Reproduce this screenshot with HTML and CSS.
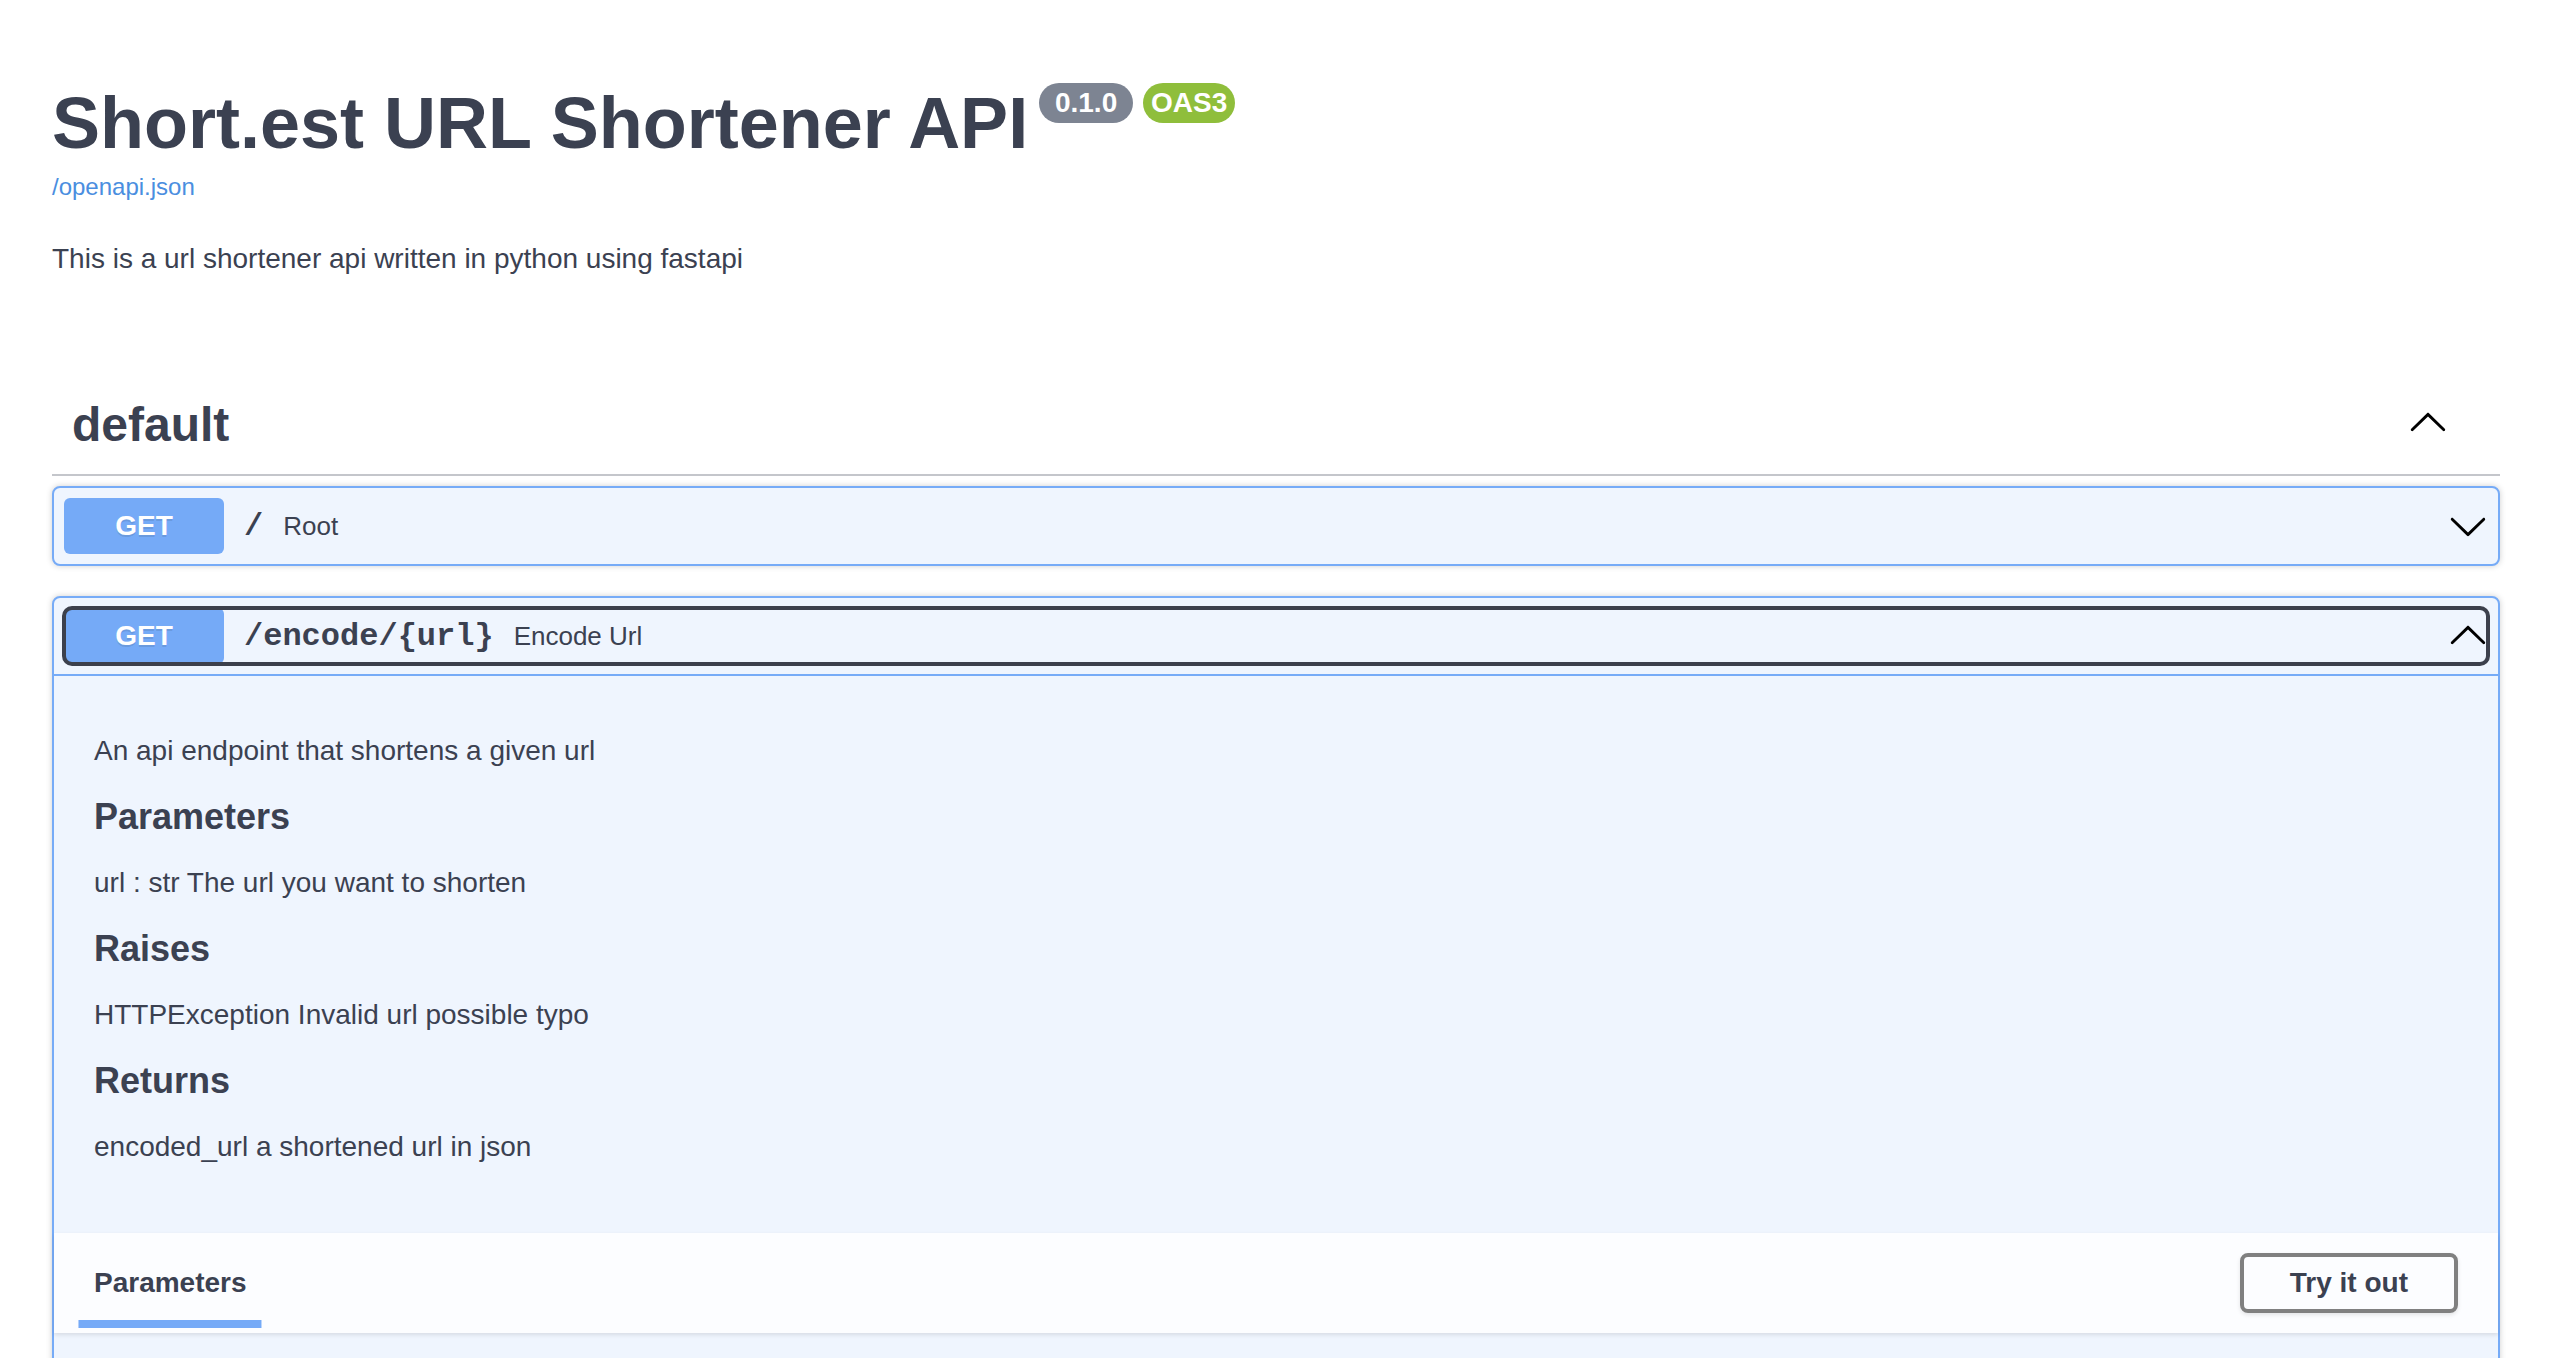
FILE: index.html
```html
<!DOCTYPE html>
<html lang="en">
<head>
<meta charset="utf-8">
<title>Short.est URL Shortener API - Swagger UI</title>
<link rel="stylesheet" href="styles.css">
</head>
<body>
<div class="wrapper">
  <section class="info">
    <div class="main">
      <h2 class="title">
        <span class="title-text">Short.est URL Shortener API</span>
        <span class="badges">
          <span class="badge badge-version"> 0.1.0 </span>
          <span class="badge badge-oas">OAS3</span>
        </span>
      </h2>
      <a class="link" href="#">/openapi.json</a>
    </div>
    <div class="info-desc">
      <p>This is a url shortener api written in python using fastapi</p>
    </div>
  </section>

  <section class="tag-section">
    <h3 class="opblock-tag">
      <span class="tag-name">default</span>
      <svg class="tag-arrow" viewBox="0 0 20 20" aria-hidden="true"><path transform="rotate(180 10 10)" d="M17.418 6.109c.272-.268.709-.268.979 0s.271.701 0 .969l-7.908 7.83c-.27.268-.707.268-.979 0l-7.908-7.830c-.27-.268-.27-.701 0-.969.271-.268.709-.268.979 0L10 13.25l7.418-7.141z"/></svg>
    </h3>

    <div class="opblock">
      <div class="opblock-summary">
        <div class="summary-control">
          <span class="method">GET</span>
          <span class="path">/</span>
          <span class="summary-desc">Root</span>
          <svg class="op-arrow" viewBox="0 0 20 20" aria-hidden="true"><path d="M17.418 6.109c.272-.268.709-.268.979 0s.271.701 0 .969l-7.908 7.83c-.27.268-.707.268-.979 0l-7.908-7.83c-.27-.268-.27-.701 0-.969.271-.268.709-.268.979 0L10 13.25l7.418-7.141z"/></svg>
        </div>
      </div>
    </div>

    <div class="opblock is-open">
      <div class="opblock-summary">
        <div class="summary-control focused">
          <span class="method">GET</span>
          <span class="path">/encode/{url}</span>
          <span class="summary-desc">Encode Url</span>
          <svg class="op-arrow" viewBox="0 0 20 20" aria-hidden="true"><path transform="rotate(180 10 10)" d="M17.418 6.109c.272-.268.709-.268.979 0s.271.701 0 .969l-7.908 7.83c-.27.268-.707.268-.979 0l-7.908-7.83c-.27-.268-.27-.701 0-.969.271-.268.709-.268.979 0L10 13.25l7.418-7.141z"/></svg>
        </div>
      </div>
      <div class="opblock-body">
        <div class="description-wrapper">
          <div class="markdown">
            <p>An api endpoint that shortens a given url</p>
            <h2>Parameters</h2>
            <p>url : str The url you want to shorten</p>
            <h2>Raises</h2>
            <p>HTTPException Invalid url possible typo</p>
            <h2>Returns</h2>
            <p>encoded_url a shortened url in json</p>
          </div>
        </div>
        <div class="section-header">
          <div class="tab"><h4><span class="tab-label">Parameters</span></h4></div>
          <button class="btn-try" type="button">Try it out</button>
        </div>
        <div class="table-container"></div>
      </div>
    </div>
  </section>
</div>
</body>
</html>
```
FILE: styles.css
```css
html, body {
  margin: 0;
  background: #ffffff;
}

body {
  font-family: "Liberation Sans", Arial, Helvetica, sans-serif;
  color: #3b4151;
}

.wrapper {
  padding: 0 56px 0 52px;
}

/* ---------- info ---------- */
.info {
  padding-top: 82px;
}

.title {
  display: flex;
  align-items: flex-start;
  margin: 0;
  font-size: 72px;
  line-height: 82px;
  font-weight: 700;
  color: #3b4151;
}

.badges {
  display: flex;
  gap: 10px;
  margin-left: 11px;
  margin-top: 1px;
}

.badge {
  font-family: "Liberation Sans", Arial, sans-serif;
  font-size: 28px;
  line-height: 32px;
  font-weight: 700;
  color: #ffffff;
  padding: 4px 8px;
  border-radius: 114px;
  white-space: pre;
}

.badge-version {
  background: #7d8492;
}

.badge-oas {
  background: #8fbe3b;
}

.link {
  display: block;
  margin-top: 9px;
  font-size: 24px;
  line-height: 28px;
  color: #4a8ee0;
  text-decoration: none;
}

.info-desc p {
  margin: 42px 0 0;
  font-size: 28px;
  line-height: 32px;
  color: #3b4151;
}

/* ---------- tag ---------- */
.tag-section {
  margin-top: 104px;
}

.opblock-tag {
  display: flex;
  align-items: center;
  margin: 0 0 10px;
  padding: 18px 52px 22px 20px;
  border-bottom: 2px solid #c4c6cb;
  font-size: 48px;
  line-height: 55px;
  font-weight: 700;
  color: #3b4151;
}

.tag-name {
  flex: 1;
}

.tag-arrow {
  display: block;
  width: 40px;
  height: 40px;
  margin-bottom: 3px;
  fill: #000000;
}

/* ---------- operation blocks ---------- */
.opblock {
  margin-bottom: 30px;
  border: 2px solid #76abf7;
  border-radius: 8px;
  background: #eff5fe;
  box-shadow: 0 0 6px rgba(0, 0, 0, 0.19);
}

.opblock-summary {
  display: flex;
  padding: 10px;
}

.opblock.is-open .opblock-summary {
  border-bottom: 2px solid #76abf7;
}

.summary-control {
  flex: 1;
  display: flex;
  align-items: center;
  border-radius: 8px;
}

.summary-control.focused {
  outline: 4px solid #3c404c;
  outline-offset: -2px;
}

.method {
  min-width: 160px;
  padding: 12px 0;
  font-size: 28px;
  line-height: 32px;
  font-weight: 700;
  color: #ffffff;
  text-align: center;
  background: #75aaf7;
  border-radius: 6px;
  text-shadow: 0 2px 0 rgba(0, 0, 0, 0.1);
}

.path {
  padding: 0 20px;
  font-family: "Liberation Mono", "Courier New", monospace;
  font-size: 32px;
  font-weight: 700;
  color: #3b4151;
}

.summary-desc {
  flex: 1;
  font-size: 26px;
  color: #3b4151;
}

.op-arrow {
  flex: none;
  display: block;
  width: 40px;
  height: 40px;
  fill: #000000;
}

/* ---------- body ---------- */
.description-wrapper {
  padding: 31px 40px 42px;
}

.markdown > * {
  margin: 24px 0;
  color: #3b4151;
}

.markdown p {
  font-size: 28px;
  line-height: 40px;
}

.markdown h2 {
  font-size: 36px;
  line-height: 44px;
  font-weight: 700;
}

.section-header {
  display: flex;
  align-items: center;
  justify-content: space-between;
  box-sizing: border-box;
  min-height: 100px;
  padding: 16px 40px;
  background: rgba(255, 255, 255, 0.8);
  box-shadow: 0 2px 4px rgba(0, 0, 0, 0.1);
}

.tab h4 {
  margin: 0;
  font-size: 28px;
  line-height: 32px;
  font-weight: 700;
  color: #3b4151;
}

.tab-label {
  position: relative;
}

.tab-label::after {
  content: "";
  position: absolute;
  left: 50%;
  bottom: -30px;
  width: 120%;
  height: 8px;
  transform: translateX(-50%);
  background: #75aaf7;
}

.btn-try {
  font-family: "Liberation Sans", Arial, sans-serif;
  font-size: 28px;
  line-height: 32px;
  font-weight: 700;
  color: #3b4151;
  padding: 10px 46px;
  border: 4px solid #808080;
  border-radius: 8px;
  background: transparent;
  box-shadow: 0 2px 4px rgba(0, 0, 0, 0.1);
}

.table-container {
  height: 120px;
}
```
